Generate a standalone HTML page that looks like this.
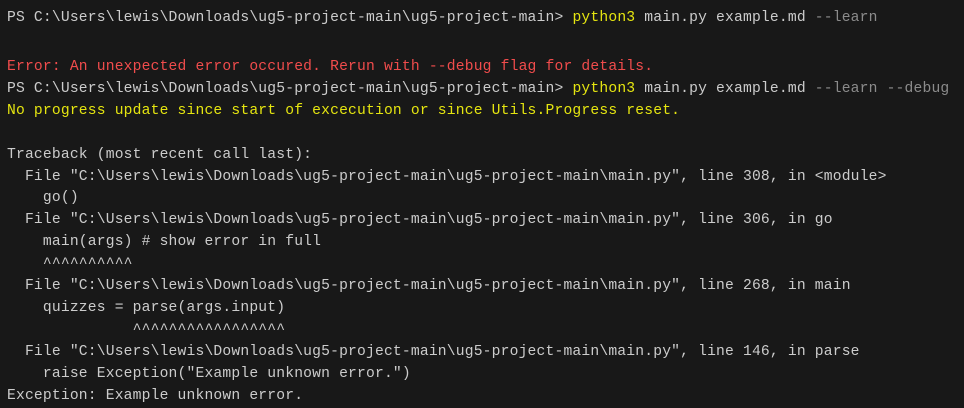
<!DOCTYPE html>
<html><head><style>
html,body{margin:0;padding:0;background:#181818;width:964px;height:407px;overflow:hidden}
pre{margin:0;position:absolute;left:7px;font-family:"Liberation Mono",monospace;font-size:14.67px;letter-spacing:0.18px;line-height:21.9px;color:#cccccc;white-space:pre}
.r{color:#f14c4c}.y{color:#e5e510}.g{color:#8b8b8b}
</style></head><body>
<pre style="top:8px">PS C:\Users\lewis\Downloads\ug5-project-main\ug5-project-main&gt; <span class="y">python3</span> main.py example.md <span class="g">--learn</span></pre>
<pre style="top:57px"><span class="r">Error: An unexpected error occured. Rerun with --debug flag for details.</span>
PS C:\Users\lewis\Downloads\ug5-project-main\ug5-project-main&gt; <span class="y">python3</span> main.py example.md <span class="g">--learn --debug</span>
<span class="y">No progress update since start of excecution or since Utils.Progress reset.</span>

Traceback (most recent call last):
  File "C:\Users\lewis\Downloads\ug5-project-main\ug5-project-main\main.py", line 308, in &lt;module&gt;
    go()
  File "C:\Users\lewis\Downloads\ug5-project-main\ug5-project-main\main.py", line 306, in go
    main(args) # show error in full
    ^^^^^^^^^^
  File "C:\Users\lewis\Downloads\ug5-project-main\ug5-project-main\main.py", line 268, in main
    quizzes = parse(args.input)
              ^^^^^^^^^^^^^^^^^
  File "C:\Users\lewis\Downloads\ug5-project-main\ug5-project-main\main.py", line 146, in parse
    raise Exception("Example unknown error.")
Exception: Example unknown error.</pre>
</body></html>
